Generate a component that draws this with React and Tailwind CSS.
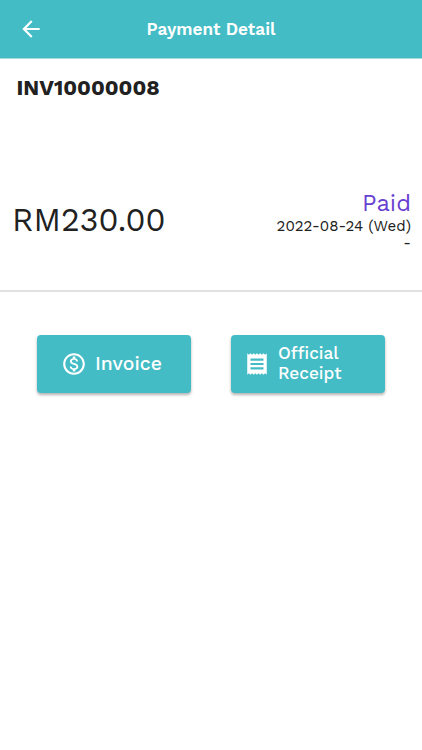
import { MdArrowBack, MdOutlineMonetizationOn, MdReceipt } from 'react-icons/md'

const payment = {
  invoiceNo: 'INV10000008',
  amount: 'RM230.00',
  status: 'Paid',
  date: '2022-08-24 (Wed)',
  remark: '-',
}

function Header({ title }) {
  return (
    <header className="relative flex h-[59px] items-center justify-center border-b border-[#a9d9dc] bg-[#43bcc5] text-white">
      <button type="button" aria-label="Back" className="absolute left-[17.5px] top-[15.5px]">
        <MdArrowBack size={26} />
      </button>
      <h1 className="-mt-px text-[17.2px] font-semibold leading-6">{title}</h1>
    </header>
  )
}

function Summary({ payment }) {
  return (
    <section className="h-[233px] border-b-2 border-[#e1e1e1] text-[#212121]">
      <h2 className="pl-[16.5px] pt-[17px] text-[21.5px] font-bold leading-6">{payment.invoiceNo}</h2>
      <div className="mt-[87px] flex items-start justify-between pl-[12px] pr-[11px]">
        <p className="text-[32.2px] leading-[66px]">{payment.amount}</p>
        <div className="flex flex-col items-end pt-[2px]">
          <span className="text-[23.7px] leading-[28px] text-[#6741d0]">{payment.status}</span>
          <span className="text-[15.1px] leading-[18px]">{payment.date}</span>
          <span className="text-[15.1px] leading-[16px]">{payment.remark}</span>
        </div>
      </div>
    </section>
  )
}

function ActionButton({ icon: Icon, className, children }) {
  return (
    <button
      type="button"
      className={`flex h-[58px] w-[154px] items-center rounded-[4px] bg-[#43bcc5] text-left font-medium text-white shadow-[0_2px_3px_rgba(0,0,0,0.3)] ${className}`}
    >
      <Icon size={26} className="shrink-0" />
      {children}
    </button>
  )
}

export default function App() {
  return (
    <div className="min-h-screen bg-white font-['Work_Sans',Inter,sans-serif]">
      <Header title="Payment Detail" />
      <Summary payment={payment} />
      <div className="flex justify-between px-[37px] pt-[42.5px]">
        <ActionButton icon={MdOutlineMonetizationOn} className="gap-2 pl-6">
          <span className="text-[19.4px] leading-[25px]">Invoice</span>
        </ActionButton>
        <ActionButton icon={MdReceipt} className="gap-2 pl-[13px]">
          <span className="w-[80px] pb-px text-[17.2px] leading-5">Official Receipt</span>
        </ActionButton>
      </div>
    </div>
  )
}
